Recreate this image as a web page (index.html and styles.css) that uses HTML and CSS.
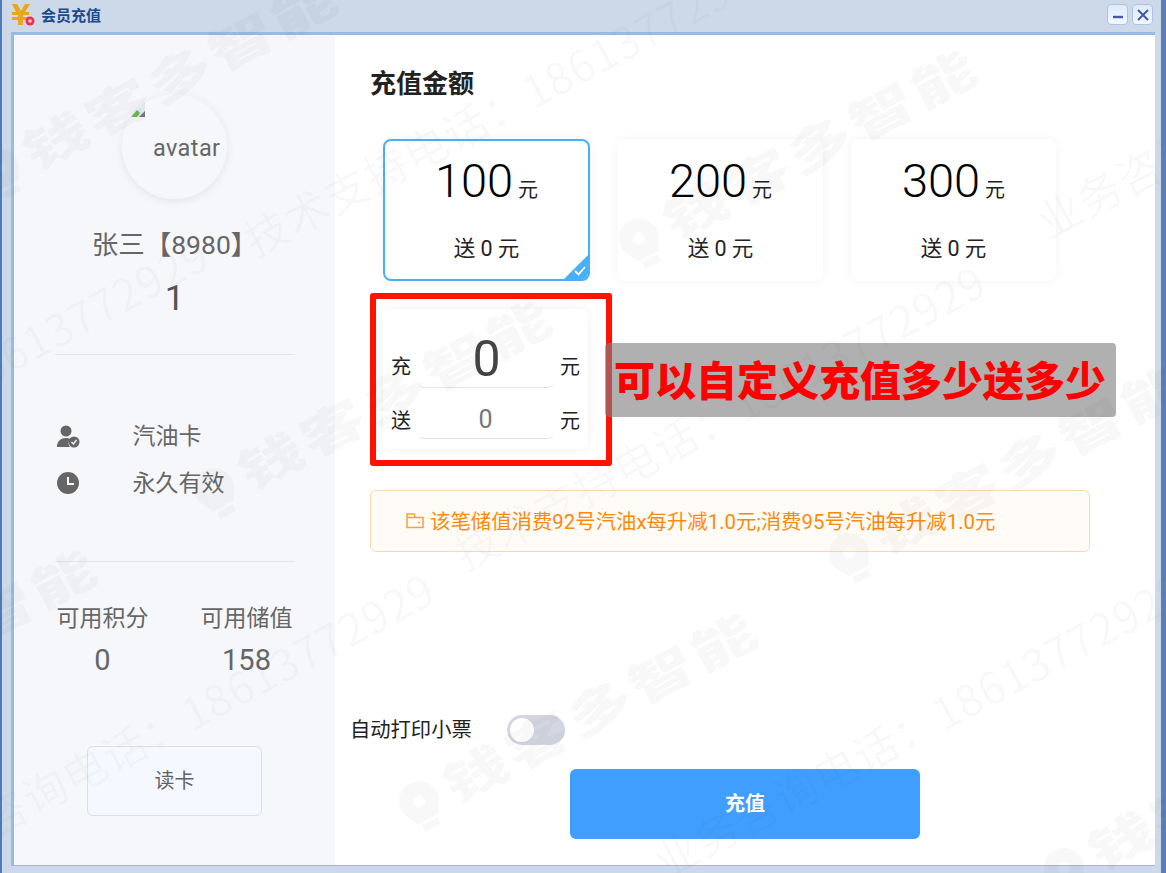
FILE: index.html
```html
<!DOCTYPE html>
<html lang="zh-CN">
<head>
    <meta charset="UTF-8" />
    <title>会员充值</title>
    <link rel="stylesheet" href="styles.css">
</head>
<body>
    <div class="window">
        <div class="titlebar">
            <svg class="app-icon" width="24" height="24" viewBox="0 0 24 24">
                <path d="M1 1h5l4 7 4-7h5l-5 8h4v3h-6v2h6v3h-6v5h-5v-5H1v-3h6v-2H1V9h4z" fill="#eba51c"/>
                <circle cx="19" cy="18" r="4.5" fill="#e8344e"/>
                <circle cx="19" cy="18" r="1.8" fill="#fbc6cf"/>
            </svg>
            <span class="title">会员充值</span>
            <div class="win-btns">
                <span class="win-btn"><svg width="14" height="14" viewBox="0 0 14 14"><path d="M2 9h10" stroke="#3f5ba8" stroke-width="2.4"/></svg></span>
                <span class="win-btn"><svg width="14" height="14" viewBox="0 0 14 14"><path d="M2 2l10 10M12 2L2 12" stroke="#3f5ba8" stroke-width="2"/></svg></span>
            </div>
        </div>

        <div class="content">
            <aside class="sidebar">
                <div class="avatar">
                    <svg class="broken-img" width="16" height="16" viewBox="0 0 16 16">
                        <path d="M1 15L14 1l1 0 0 14z" fill="#dfe8f5"/>
                        <path d="M1 15l6-7 3 3-3 4z" fill="#6db84c"/>
                        <path d="M9 15l6-6v6z" fill="#777"/>
                    </svg>
                    <span class="avatar-alt">avatar</span>
                </div>
                <div class="member-name">张三【8980】</div>
                <div class="member-no">1</div>
                <div class="divider"></div>
                <div class="info-list">
                    <div class="info-row">
                        <svg width="24" height="24" viewBox="0 0 24 24">
                            <circle cx="10" cy="7" r="5.5" fill="#666"/>
                            <path d="M1 23c0-6 4-9 9-9 2 0 3 .4 4 1-2 2-2 6 0 8z" fill="#666"/>
                            <circle cx="18" cy="18" r="5.5" fill="#666"/>
                            <path d="M15.500 18l2 2 3-4" stroke="#f6f7fb" stroke-width="1.300" fill="none"/>
                        </svg>
                        <span>汽油卡</span>
                    </div>
                    <div class="info-row">
                        <svg width="24" height="24" viewBox="0 0 24 24">
                            <circle cx="12" cy="12" r="11" fill="#666"/>
                            <path d="M12 6v7h6" stroke="#f6f7fb" stroke-width="2" fill="none"/>
                        </svg>
                        <span>永久有效</span>
                    </div>
                </div>
                <div class="divider"></div>
                <div class="balance">
                    <div class="balance-item">
                        <div class="balance-label">可用积分</div>
                        <div class="balance-value">0</div>
                    </div>
                    <div class="balance-item">
                        <div class="balance-label">可用储值</div>
                        <div class="balance-value">158</div>
                    </div>
                </div>
                <button class="read-card">读卡</button>
            </aside>

            <main class="panel">
                <h2 class="panel-title">充值金额</h2>
                <div class="amount-grid">
                    <div class="amount-card active">
                        <div class="amount"><b>100</b> 元</div>
                        <div class="gift">送 0 元</div>
                        <span class="corner"></span>
                        <svg class="corner-check" width="12" height="10" viewBox="0 0 12 10"><path d="M1 5l3.500 3.500L11 1" stroke="#fff" stroke-width="1.800" fill="none"/></svg>
                    </div>
                    <div class="amount-card">
                        <div class="amount"><b>200</b> 元</div>
                        <div class="gift">送 0 元</div>
                    </div>
                    <div class="amount-card">
                        <div class="amount"><b>300</b> 元</div>
                        <div class="gift">送 0 元</div>
                    </div>
                </div>

                <div class="custom-row">
                    <div class="red-box">
                        <div class="custom-card">
                            <div class="custom-line">
                                <span>充</span>
                                <div class="custom-input big">0</div>
                                <span>元</span>
                            </div>
                            <div class="custom-line">
                                <span>送</span>
                                <div class="custom-input">0</div>
                                <span>元</span>
                            </div>
                        </div>
                    </div>
                    <div class="callout">可以自定义充值多少送多少</div>
                </div>

                <div class="notice">
                    <svg width="18" height="17" viewBox="0 0 18 17"><path d="M1 15.500V2h7l1.500 3.500H17v10zM1 5.500h8.500" stroke="#f7a03c" stroke-width="1.500" fill="none"/><path d="M12 10.500h2" stroke="#f7a03c" stroke-width="1.500"/></svg>
                    <span>该笔储值消费92号汽油x每升减1.0元;消费95号汽油每升减1.0元</span>
                </div>

                <div class="print-row">
                    <span class="print-label">自动打印小票</span>
                    <span class="switch"><i></i></span>
                </div>
                <button class="submit">充值</button>
            </main>
        </div>

        <!-- watermark: brand stamps and phone lines over the whole window -->
        <svg class="watermark" width="1166" height="873" viewBox="0 0 1166 873">
            <defs>
                <g id="mark-brand">
                    <path fill-rule="evenodd" d="M0 -22a20 20 0 0 1 20 20c0 9-6 12-8 20h-24c-2-8-8-11-8-20a20 20 0 0 1 20-20zM0 -8a6 6 0 1 0 .01 0zM-9 21h18v7h-18z"/>
                    <text transform="translate(30 18) scale(1 .72)" class="wm-brand">钱客多智能</text>
                </g>
                <text id="mark-tech" class="wm-line">技术支持电话：18613772929</text>
                <text id="mark-biz" class="wm-line">业务咨询电话：18613772929</text>
            </defs>
            <use href="#mark-brand" transform="translate(0 170) rotate(-28)"/>
            <use href="#mark-brand" transform="translate(215 490) rotate(-28)"/>
            <use href="#mark-brand" transform="translate(-240 740) rotate(-28)"/>
            <use href="#mark-brand" transform="translate(420 803) rotate(-28)"/>
            <use href="#mark-brand" transform="translate(640 240) rotate(-28)"/>
            <use href="#mark-brand" transform="translate(850 555) rotate(-28)"/>
            <use href="#mark-brand" transform="translate(1065 870) rotate(-28)"/>
            <use href="#mark-tech" transform="translate(255 258) rotate(-28)"/>
            <use href="#mark-tech" transform="translate(465 572) rotate(-28)"/>
            <use href="#mark-biz" transform="translate(665 880) rotate(-28)"/>
            <use href="#mark-biz" transform="translate(-86 880) rotate(-28)"/>
            <use href="#mark-biz" transform="translate(-312 545) rotate(-28)"/>
            <use href="#mark-biz" transform="translate(1048 240) rotate(-28)"/>
        </svg>
    </div>
</body>
</html>
```

FILE: styles.css
```css
* {
    box-sizing: border-box;
}

html,
body {
    margin: 0;
    height: 100%;
    overflow: hidden;
}

body {
    font-family: "Roboto", "Noto Sans CJK SC", sans-serif;
    background: #cfdbea;
}

.window {
    position: relative;
    width: 1166px;
    height: 873px;
    display: flex;
    flex-direction: column;
    padding: 0 6px 7px 9px;
    background: #cdd9e8;
    border-left: 2px solid #4f7cb8;
    border-right: 5px solid #5b80b8;
}

.titlebar {
    height: 32px;
    display: flex;
    align-items: center;
    padding-bottom: 3px;
    padding-right: 2px;
}

.app-icon {
    margin-right: 6px;
}

.title {
    font-size: 15px;
    font-weight: 700;
    color: #1c4a8f;
}

.win-btns {
    margin-left: auto;
    display: flex;
    gap: 4px;
}

.win-btn {
    width: 21px;
    height: 21px;
    border: 1px solid #a8c4ea;
    border-radius: 4px;
    background: linear-gradient(#dfeafa, #f3f7fd);
    display: flex;
    align-items: center;
    justify-content: center;
}

.content {
    flex: 1;
    display: flex;
    min-height: 0;
    border: 3px solid #97bae6;
    border-width: 3px 0 1px 3px;
    background: #fff;
}

.sidebar {
    width: 321px;
    background: #f6f7fb;
    display: flex;
    flex-direction: column;
    align-items: center;
    padding-top: 59px;
    color: #666;
}

.avatar {
    width: 105px;
    height: 105px;
    border-radius: 50%;
    background: #f6f7fb;
    box-shadow: 0 2px 10px rgba(0, 0, 0, 0.08);
    position: relative;
    font-size: 23.5px;
}

.broken-img {
    position: absolute;
    left: 8px;
    top: 8px;
}

.avatar-alt {
    position: absolute;
    left: 31px;
    top: 40px;
    line-height: 28px;
    letter-spacing: 0.4px;
}

.member-name {
    margin-top: 29px;
    font-size: 26.5px;
    line-height: 34px;
    white-space: nowrap;
}

.member-no {
    margin-top: 17px;
    font-size: 35px;
    line-height: 40px;
    color: #555;
}

.divider {
    width: 240px;
    height: 1px;
    background: #e3e5ea;
    flex-shrink: 0;
}

.member-no + .divider {
    margin-top: 35px;
}

.info-list {
    width: 240px;
    height: 206px;
    padding-top: 63px;
    display: flex;
    flex-direction: column;
    gap: 15px;
}

.info-row {
    display: flex;
    align-items: center;
    height: 32px;
    padding-left: 1px;
    font-size: 23px;
    gap: 53px;
}

.info-row svg {
    margin-top: 4px;
}

.balance {
    width: 236px;
    margin-top: 41px;
    display: flex;
    justify-content: space-between;
    text-align: center;
}

.balance-label {
    font-size: 23px;
    line-height: 32px;
}

.balance-value {
    font-size: 29px;
    line-height: 44px;
    margin-top: 3px;
}

.read-card {
    margin-top: 64px;
    width: 175px;
    height: 70px;
    padding-bottom: 5px;
    background: #f5f9ff;
    border: 1px solid #dcdfe6;
    border-radius: 6px;
    color: #606266;
    font-family: inherit;
    font-size: 20px;
}

.panel {
    flex: 1;
    position: relative;
    padding-left: 35px;
}

.panel-title {
    margin: 32px 0 0;
    font-size: 26px;
    line-height: 34px;
    font-weight: 700;
    color: #222;
}

.amount-grid {
    margin: 38px 0 0 13px;
    display: flex;
    gap: 28px;
}

.amount-card {
    position: relative;
    width: 205px;
    height: 142px;
    border-radius: 8px;
    background: #fff;
    box-shadow: 0 0 12px rgba(0, 0, 0, 0.05);
    text-align: center;
    color: #222;
}

.amount-card.active {
    width: 207px;
    border: 2px solid #48b0f7;
    overflow: hidden;
}

.amount {
    margin-top: 10px;
    font-size: 20px;
    line-height: 64px;
}

.amount b {
    font-size: 47px;
    font-weight: 300;
    color: #000;
}

.active .amount {
    margin-top: 8px;
}

.gift {
    margin-top: 12px;
    font-size: 21.5px;
    line-height: 30px;
}

.corner {
    position: absolute;
    right: 0;
    bottom: 0;
    width: 0;
    height: 0;
    border-left: 24px solid transparent;
    border-bottom: 24px solid #48b0f7;
}

.corner-check {
    position: absolute;
    right: 2px;
    bottom: 3px;
}

.custom-row {
    margin-top: 12px;
    display: flex;
    align-items: center;
}

.red-box {
    width: 242px;
    height: 173px;
    border: 6px solid #ff1200;
    border-radius: 3px;
    padding: 10px 0 0 7px;
}

.custom-card {
    width: 205px;
    height: 140px;
    border-radius: 6px;
    background: #fff;
    box-shadow: 0 0 12px rgba(0, 0, 0, 0.06);
    padding: 21px 8px 0;
}

.custom-line {
    display: flex;
    align-items: flex-end;
    justify-content: space-between;
    font-size: 20px;
    color: #222;
}

.custom-line span {
    line-height: 30px;
    margin-bottom: 3px;
}

.custom-line:first-child span {
    margin-bottom: 6px;
}

.custom-input {
    width: 136px;
    height: 38px;
    line-height: 38px;
    text-align: center;
    font-size: 25px;
    color: #777;
    border-bottom: 1px solid #e2e4ea;
    border-radius: 0 0 6px 6px;
    margin-top: 13px;
}

.custom-input.big {
    height: 58px;
    line-height: 58px;
    font-size: 50px;
    color: #444;
    margin-top: 0;
    padding-left: 2px;
}

.callout {
    margin-left: -7px;
    width: 511px;
    height: 74px;
    background: rgba(128, 128, 128, 0.62);
    border-radius: 4px;
    color: #f00;
    font-size: 41px;
    font-weight: 900;
    line-height: 70px;
    padding-left: 9px;
    white-space: nowrap;
    font-family: "Noto Sans CJK SC", sans-serif;
    position: relative;
}

.notice {
    margin-top: 24px;
    width: 720px;
    height: 62px;
    border: 1px solid #fcd9a8;
    border-radius: 6px;
    background: #fffcf8;
    color: #fe8a0a;
    font-size: 20.4px;
    display: flex;
    align-items: center;
    padding: 0 0 2px 35px;
    gap: 6px;
}

.print-row {
    position: absolute;
    left: 15px;
    top: 678px;
    display: flex;
    align-items: center;
    gap: 35px;
    font-size: 20.3px;
    color: #222;
}

.print-label {
    padding-bottom: 4px;
}

.switch {
    width: 58px;
    height: 30px;
    border-radius: 15px;
    background: #d4d7e2;
    padding: 3px;
}

.switch i {
    display: block;
    width: 24px;
    height: 24px;
    border-radius: 50%;
    background: #fff;
}

.submit {
    position: absolute;
    left: 235px;
    top: 734px;
    width: 350px;
    height: 70px;
    padding-bottom: 4px;
    border: none;
    border-radius: 6px;
    background: #409eff;
    color: #fff;
    font-family: inherit;
    font-size: 20px;
    font-weight: 700;
}

.watermark {
    position: absolute;
    left: -2px;
    top: 0;
    pointer-events: none;
    fill: rgba(60, 60, 60, 0.035);
}

.wm-brand {
    font-family: "Noto Sans CJK SC", sans-serif;
    font-size: 66px;
    font-weight: 900;
    letter-spacing: 4px;
}

.wm-line {
    font-family: "Noto Sans CJK SC", sans-serif;
    font-size: 44px;
    letter-spacing: 1px;
}
```
